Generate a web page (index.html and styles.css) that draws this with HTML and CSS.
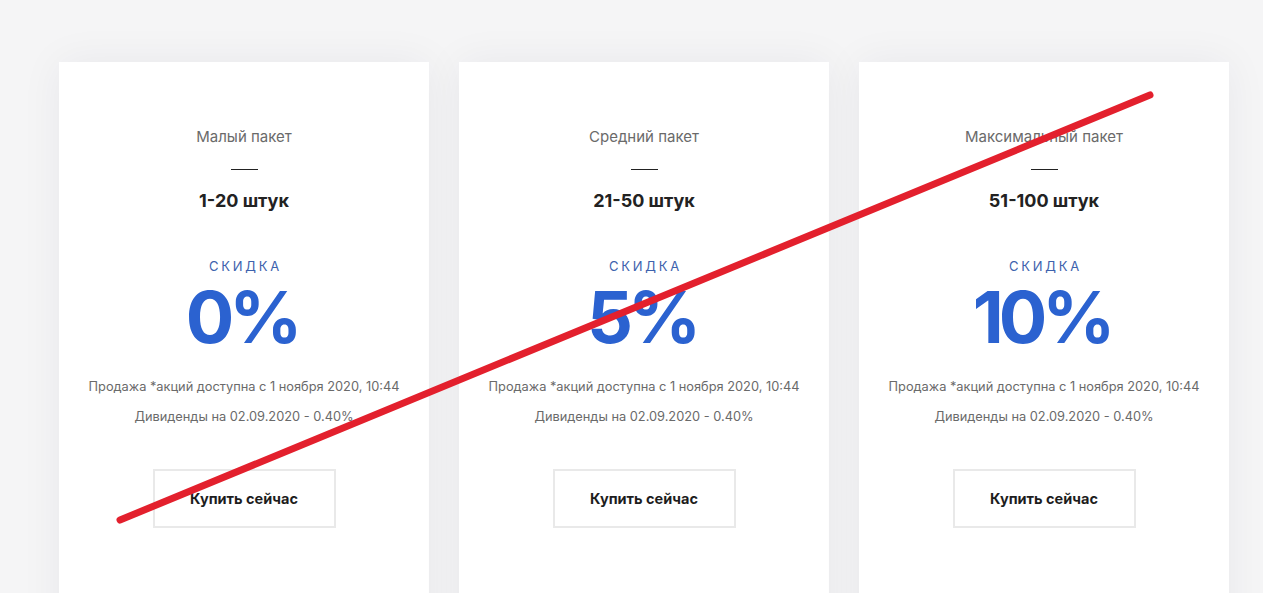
FILE: index.html
```html
<!DOCTYPE html>
<html lang="ru">
<head>
<meta charset="utf-8">
<link rel="stylesheet" href="styles.css">
</head>
<body>
<div class="page">
  <div class="cards">
    <div class="card">
      <div class="title">Малый пакет</div>
      <div class="divider"></div>
      <div class="amount">1-20 штук</div>
      <div class="label">СКИДКА</div>
      <div class="percent">0%</div>
      <div class="note">Продажа *акций доступна с 1 ноября 2020, 10:44</div>
      <div class="note note2">Дивиденды на 02.09.2020 - 0.40%</div>
      <div class="btn">Купить сейчас</div>
    </div>
    <div class="card">
      <div class="title">Средний пакет</div>
      <div class="divider"></div>
      <div class="amount">21-50 штук</div>
      <div class="label">СКИДКА</div>
      <div class="percent">5%</div>
      <div class="note">Продажа *акций доступна с 1 ноября 2020, 10:44</div>
      <div class="note note2">Дивиденды на 02.09.2020 - 0.40%</div>
      <div class="btn">Купить сейчас</div>
    </div>
    <div class="card">
      <div class="title">Максимальный пакет</div>
      <div class="divider"></div>
      <div class="amount">51-100 штук</div>
      <div class="label">СКИДКА</div>
      <div class="percent">10%</div>
      <div class="note">Продажа *акций доступна с 1 ноября 2020, 10:44</div>
      <div class="note note2">Дивиденды на 02.09.2020 - 0.40%</div>
      <div class="btn">Купить сейчас</div>
    </div>
  </div>
  <svg class="strike" width="1263" height="593" viewBox="0 0 1263 593">
    <line x1="120" y1="520" x2="1150" y2="95" stroke="#e3202d" stroke-width="7" stroke-linecap="round"/>
  </svg>
</div>
</body>
</html>
```
FILE: styles.css
```css
html, body {
  margin: 0;
  padding: 0;
}
body {
  background: #f5f5f6;
  font-family: "Inter", "Liberation Sans", sans-serif;
  overflow: hidden;
  height: 593px;
}
.page {
  position: relative;
  width: 1263px;
  height: 593px;
  overflow: hidden;
}
.cards {
  display: flex;
  gap: 30px;
  padding: 62px 0 0 59px;
}
.card {
  width: 370px;
  height: 600px;
  background: #fff;
  box-shadow: 0 0 40px rgba(40, 40, 60, 0.06);
  display: flex;
  flex-direction: column;
  align-items: center;
  text-align: center;
  padding-top: 65px;
  box-sizing: border-box;
}
.title {
  font-size: 15px;
  line-height: 20px;
  color: #6a6a6a;
  font-weight: 400;
}
.divider {
  width: 27px;
  height: 1px;
  background: #222;
  margin-top: 22px;
}
.amount {
  margin-top: 19px;
  font-size: 18px;
  line-height: 24px;
  font-weight: 700;
  color: #222;
}
.label {
  margin-top: 44px;
  font-size: 13px;
  line-height: 18px;
  letter-spacing: 2.8px;
  color: #3d62ad;
  padding-left: 3px;
}
.percent {
  margin-top: 7px;
  font-size: 72px;
  line-height: 70px;
  font-weight: 700;
  color: #2b62d0;
  letter-spacing: -5px;
  padding-right: 5px;
}
.note {
  margin-top: 26px;
  font-size: 12.8px;
  line-height: 18px;
  color: #6a6a6a;
}
.note2 {
  margin-top: 12px;
}
.btn {
  margin-top: 43px;
  width: 183px;
  height: 59px;
  box-sizing: border-box;
  border: 2px solid #e9e9e9;
  display: flex;
  align-items: center;
  justify-content: center;
  font-size: 14.5px;
  font-weight: 700;
  color: #1d1d1d;
}
.strike {
  position: absolute;
  left: 0;
  top: 0;
  pointer-events: none;
}
```
